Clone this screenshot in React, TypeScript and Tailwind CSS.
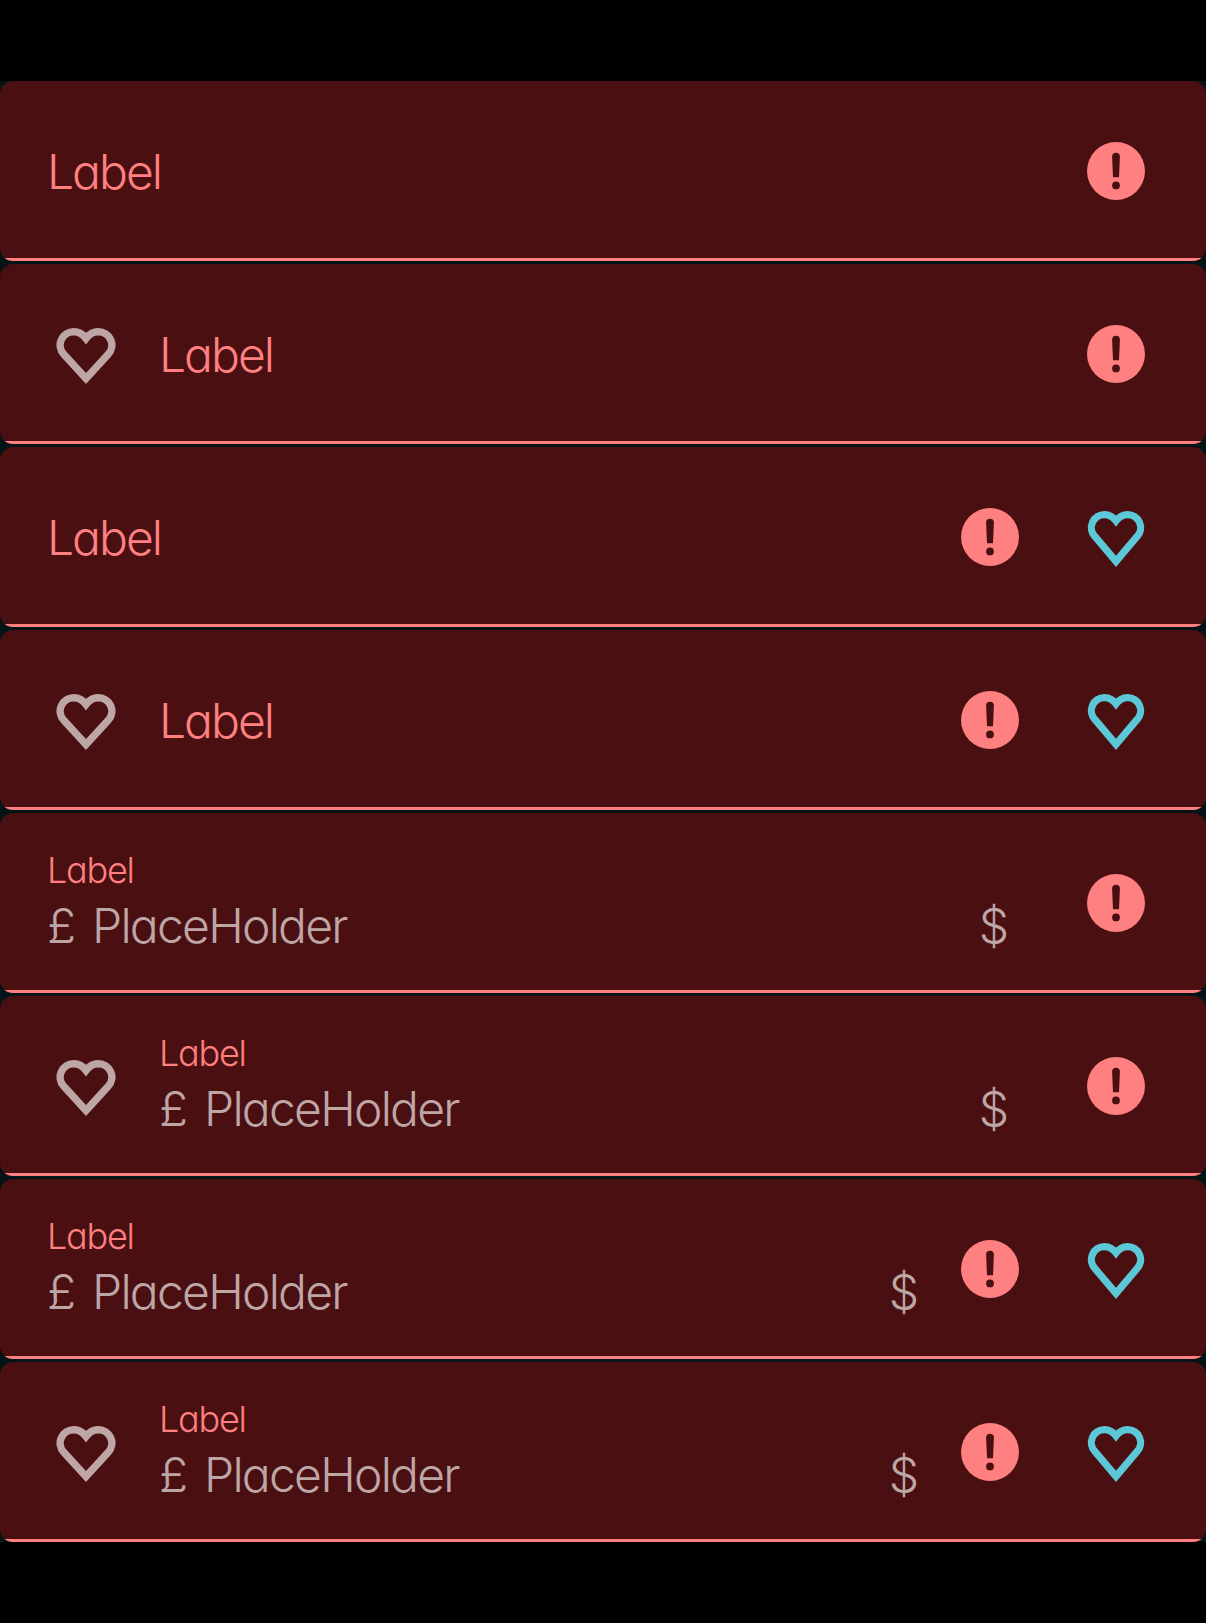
type RowProps = { leading?: boolean; trailing?: boolean; filled?: boolean };

const rows: RowProps[] = [
  {},
  { leading: true },
  { trailing: true },
  { leading: true, trailing: true },
  { filled: true },
  { filled: true, leading: true },
  { filled: true, trailing: true },
  { filled: true, leading: true, trailing: true },
];

function LeadingHeart() {
  return (
    <svg width="60" height="60" viewBox="0 0 60 60" fill="none" stroke="#bea6a7" strokeWidth="7.4" className="shrink-0">
      <path d="M30 52.6 L7.8 28.2 A13.5 13.3 0 0 1 17.8 5.8 Q25 5.8 30 12.4 Q35 5.8 42.2 5.8 A13.5 13.3 0 0 1 52.2 28.2 Z" />
    </svg>
  );
}

function TrailingHeart() {
  return (
    <svg width="60" height="60" viewBox="0 0 60 60" fill="none" stroke="#5cc8d7" strokeWidth="7.2" className="shrink-0">
      <path d="M30 52.4 L8.9 27.5 A13 13 0 0 1 18.6 5.6 Q25.2 5.6 30 11.8 Q34.8 5.6 41.4 5.6 A13 13 0 0 1 51.1 27.5 Z" />
    </svg>
  );
}

function ErrorIcon() {
  return (
    <svg width="58" height="58" viewBox="0 0 58 58" className="shrink-0">
      <circle cx="29" cy="29" r="29" fill="#ff8080" />
      <path d="M25.1 14.7 A3.9 3.9 0 0 1 32.9 14.7 L32 35.2 H26 Z" fill="#490f11" />
      <circle cx="29" cy="43.4" r="3.9" fill="#490f11" />
    </svg>
  );
}

function FieldRow({ leading, trailing, filled }: RowProps) {
  return (
    <div className="flex h-[180px] flex-col overflow-hidden rounded-[13px] bg-[#490f11] font-light">
      <div className="flex flex-1 items-center pr-[61px] pt-[3px]">
        {leading && (
          <div className="ml-14 -mr-[3px] mt-1 flex">
            <LeadingHeart />
          </div>
        )}
        {filled ? (
          <div className={leading ? "ml-[46px] flex-1" : "ml-[47px] flex-1"}>
            <div className="-mt-[7px] h-[52px] text-[36px] leading-[51px] tracking-[-1.25px] text-[#ff8080]">Label</div>
            <div className="flex h-[58px] items-center text-[48px] leading-[58px] text-[#bea6a7]">
              <span className="w-[45px]">£</span>
              <span className="tracking-[-1.75px]">PlaceHolder</span>
              <span className={trailing ? "ml-auto mr-[42px]" : "ml-auto mr-[78px]"}>$</span>
            </div>
          </div>
        ) : (
          <div className={leading ? "ml-[46px] mt-[2px] flex-1 text-[48px] leading-none tracking-[-2px] text-[#ff8080]" : "ml-[47px] mt-[2px] flex-1 text-[48px] leading-none tracking-[-2px] text-[#ff8080]"}>
            Label
          </div>
        )}
        <ErrorIcon />
        {trailing && (
          <div className="-mr-[1px] ml-[67px] mt-1 flex">
            <TrailingHeart />
          </div>
        )}
      </div>
      <div className="h-[3px] bg-[#ff8080]" />
    </div>
  );
}

export default function App() {
  return (
    <div className="min-h-[1623px] bg-black py-[81px] font-['Inter',sans-serif] [font-feature-settings:'cv11']">
      <div className="flex flex-col gap-[3px] bg-[#031416]">
        {rows.map((row, i) => (
          <FieldRow key={i} {...row} />
        ))}
      </div>
    </div>
  );
}
